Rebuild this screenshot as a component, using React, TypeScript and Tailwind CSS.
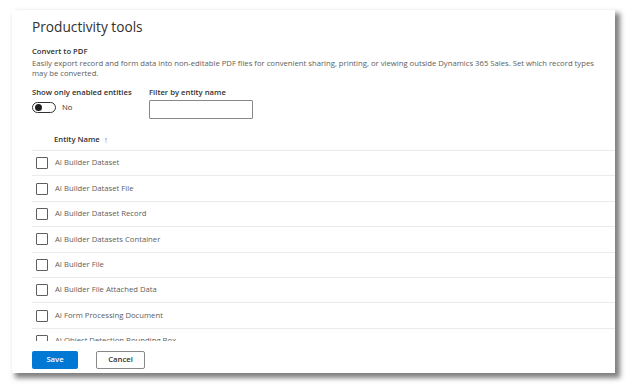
import { useState } from 'react'

const entities = [
  'AI Builder Dataset',
  'AI Builder Dataset File',
  'AI Builder Dataset Record',
  'AI Builder Datasets Container',
  'AI Builder File',
  'AI Builder File Attached Data',
  'AI Form Processing Document',
  'AI Object Detection Bounding Box',
]

function Checkbox() {
  return <div className="w-[12px] h-[12px] border border-[#605e5c] rounded-[1px] bg-white shrink-0" />
}

function Toggle({ on }: { on: boolean }) {
  return (
    <div className="flex items-center gap-[6px]">
      <div className="w-[24px] h-[11px] rounded-full border border-[#323130] flex items-center px-[2px]">
        <div className="w-[7px] h-[7px] rounded-full bg-[#201f1e]" />
      </div>
      <span className="text-[7.7px] leading-[11px] text-[#323130]">{on ? 'Yes' : 'No'}</span>
    </div>
  )
}

export default function App() {
  const [filter, setFilter] = useState('')

  return (
    <div
      className="w-[628px] h-[385px] bg-white overflow-hidden pt-[10px] pl-[12px]"
      style={{ fontFamily: '"Open Sans", "Noto Sans", sans-serif' }}
    >
      <div className="w-[603px] h-[363px] bg-white shadow-[4px_4px_5px_1px_rgba(0,0,0,0.5)] flex flex-col pt-[7px]">
        <div className="pl-[20px] pr-[12px]">
          <h1 className="text-[13.7px] leading-[20px] text-[#323130]">Productivity tools</h1>
          <div className="mt-[9px] text-[7.7px] leading-[10px] font-semibold text-[#323130]">Convert to PDF</div>
          <p className="mt-[2px] text-[7.7px] leading-[10px] text-[#605e5c] whitespace-nowrap">
            Easily export record and form data into non-editable PDF files for convenient sharing, printing, or viewing outside Dynamics 365 Sales. Set which record types
            <br />
            may be converted.
          </p>
          <div className="mt-[9px] flex">
            <div className="w-[117px] flex flex-col">
              <span className="text-[7.7px] leading-[10px] font-semibold text-[#323130]">Show only enabled entities</span>
              <div className="mt-[5px]">
                <Toggle on={false} />
              </div>
            </div>
            <div className="flex flex-col">
              <span className="text-[7.7px] leading-[10px] font-semibold text-[#323130]">Filter by entity name</span>
              <input
                value={filter}
                onChange={e => setFilter(e.target.value)}
                className="mt-[3px] w-[104px] h-[19px] border border-[#8a8886] rounded-[1px] outline-none px-[4px] text-[7.7px]"
              />
            </div>
          </div>
        </div>

        <div className="ml-[20px] mt-[7px] h-[215px] overflow-hidden">
          <div className="h-[25px] flex items-center pt-[4px] pl-[22px] border-b border-[#edebe9]">
            <span className="text-[7.7px] font-semibold text-[#323130]">Entity Name</span>
            <span className="ml-[4px] text-[9px] text-[#8a8886]">↑</span>
          </div>
          {entities.map(name => (
            <div key={name} className="h-[25.4px] flex items-center gap-[7px] pl-[4px] border-b border-[#edebe9]">
              <Checkbox />
              <span className="text-[7.7px] text-[#605e5c]">{name}</span>
            </div>
          ))}
        </div>

        <div className="pl-[20px] mt-[10px] flex gap-[18px]">
          <button className="w-[46px] h-[18px] bg-[#0078d4] text-white text-[7.7px] font-semibold rounded-[2px]">Save</button>
          <button className="w-[49px] h-[18px] border border-[#8a8886] bg-white text-[#323130] text-[7.7px] font-semibold rounded-[2px]">Cancel</button>
        </div>
      </div>
    </div>
  )
}
